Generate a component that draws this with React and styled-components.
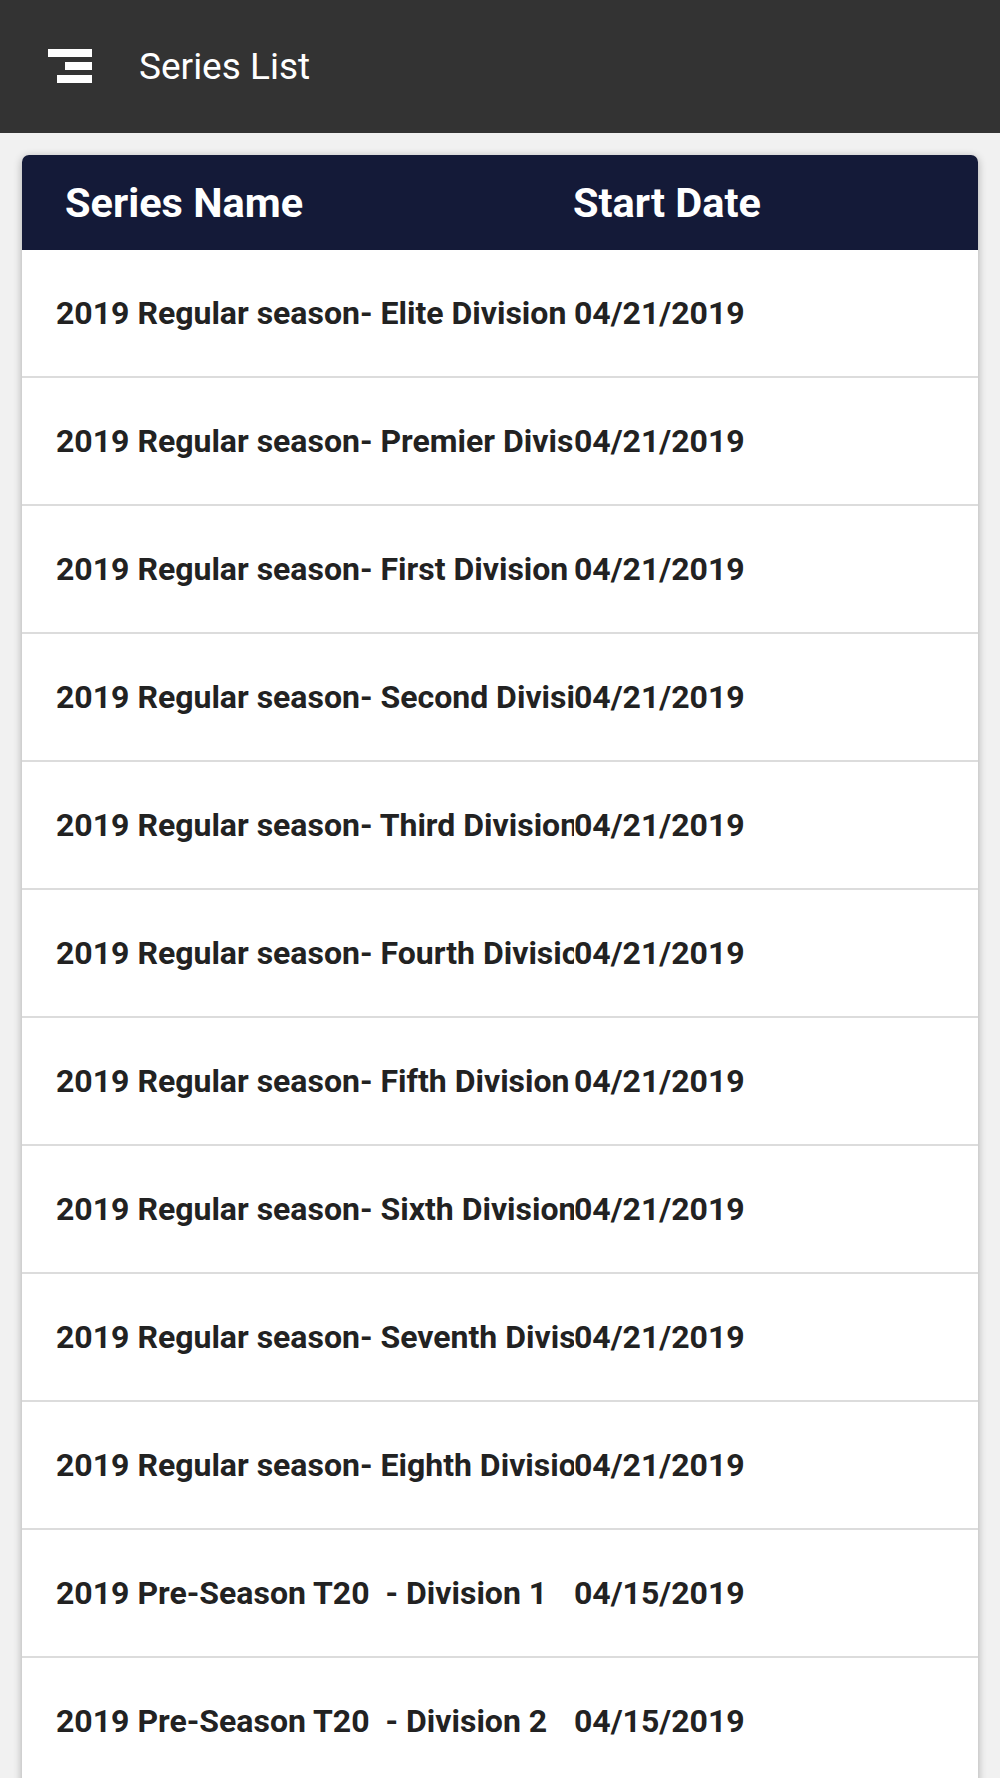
import React from "react";
import styled, { createGlobalStyle } from "styled-components";

const series = [
    { name: "2019 Regular season- Elite Division", date: "04/21/2019" },
    { name: "2019 Regular season- Premier Division", date: "04/21/2019" },
    { name: "2019 Regular season- First Division", date: "04/21/2019" },
    { name: "2019 Regular season- Second Division", date: "04/21/2019" },
    { name: "2019 Regular season- Third Division", date: "04/21/2019" },
    { name: "2019 Regular season- Fourth Division", date: "04/21/2019" },
    { name: "2019 Regular season- Fifth Division", date: "04/21/2019" },
    { name: "2019 Regular season- Sixth Division", date: "04/21/2019" },
    { name: "2019 Regular season- Seventh Division", date: "04/21/2019" },
    { name: "2019 Regular season- Eighth Division", date: "04/21/2019" },
    { name: "2019 Pre-Season T20  - Division 1", date: "04/15/2019" },
    { name: "2019 Pre-Season T20  - Division 2", date: "04/15/2019" },
];

const MenuIcon = () => (
    <svg width="44" height="34" viewBox="0 0 44 34">
        <rect x="0" y="0" width="44" height="8" fill="#fff" />
        <rect x="17" y="13" width="27" height="8" fill="#fff" />
        <rect x="9" y="26" width="35" height="8" fill="#fff" />
    </svg>
);

const App = () => {
    return (
        <>
            <GlobalStyle />
            <AppBar>
                <MenuButton>
                    <MenuIcon />
                </MenuButton>
                <Title>Series List</Title>
            </AppBar>
            <Page>
                <Card>
                    <HeadRow>
                        <HeadCell>Series Name</HeadCell>
                        <HeadCell>Start Date</HeadCell>
                    </HeadRow>
                    {series.map((s, i) => (
                        <Row key={i}>
                            <NameCell>{s.name}</NameCell>
                            <DateCell>{s.date}</DateCell>
                        </Row>
                    ))}
                </Card>
            </Page>
        </>
    );
};

export default App;

const GlobalStyle = createGlobalStyle`
    body {
        margin: 0;
        background: #f1f1f1;
        font-family: Roboto, "Liberation Sans", sans-serif;
    }
`;

const AppBar = styled.header`
    height: 133px;
    background: #333333;
    display: flex;
    align-items: center;
    padding-left: 48px;
    box-sizing: border-box;
`;

const MenuButton = styled.div`
    display: flex;
    align-items: center;
    width: 91px;
    margin-top: -1px;
`;

const Title = styled.h1`
    margin: 0;
    color: #fff;
    font-size: 37px;
    font-weight: 400;
`;

const Page = styled.main`
    padding: 22px 22px 0;
`;

const Card = styled.div`
    background: #fff;
    border-radius: 7px 7px 0 0;
    overflow: hidden;
    box-shadow: 0 2px 8px rgba(0, 0, 0, 0.3);
`;

const HeadRow = styled.div`
    display: grid;
    grid-template-columns: 551px 1fr;
    height: 95px;
    align-items: center;
    background: #141a38;
    color: #fff;
`;

const HeadCell = styled.div`
    font-size: 41.5px;
    font-weight: 700;
    &:first-child {
        padding-left: 43px;
    }
`;

const Row = styled.div`
    display: grid;
    grid-template-columns: 552px 1fr;
    height: 126px;
    align-items: center;
    border-bottom: 2px solid #dcdcdc;
    color: #222;
    font-size: 32px;
    font-weight: 700;
`;

const NameCell = styled.div`
    padding-left: 34px;
    white-space: pre;
    overflow: hidden;
`;

const DateCell = styled.div`
    white-space: nowrap;
`;
